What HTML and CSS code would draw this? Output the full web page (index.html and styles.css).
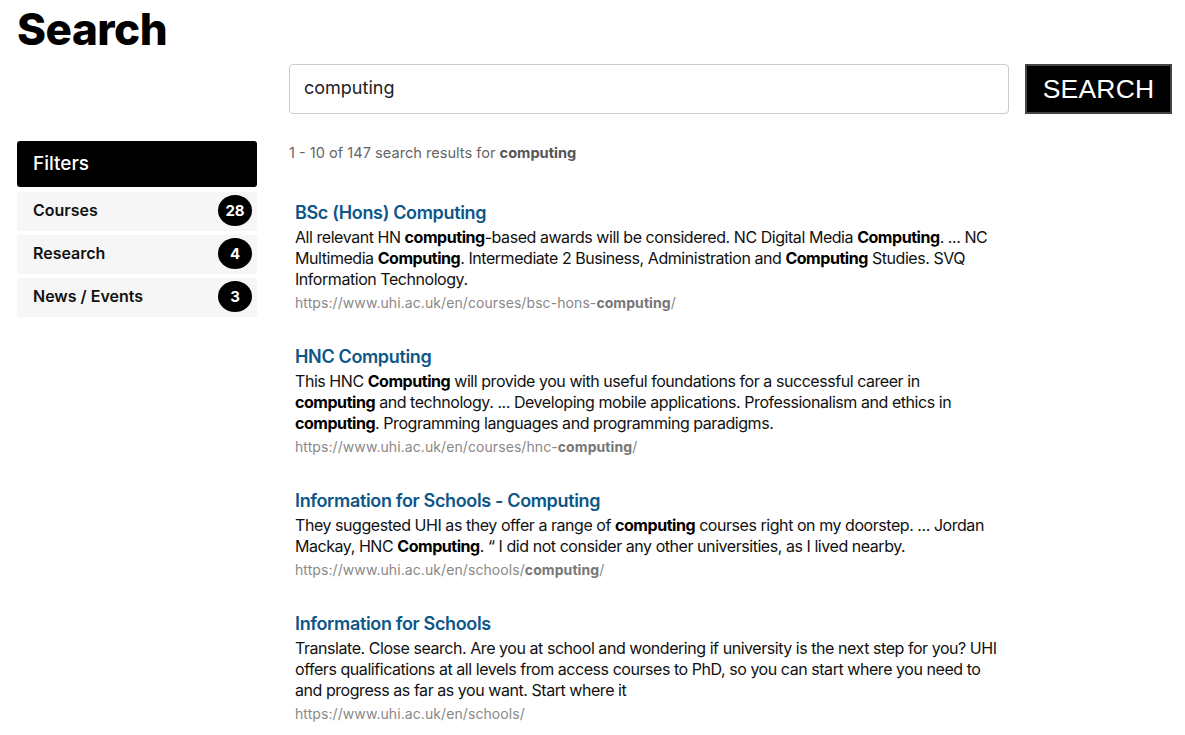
FILE: index.html
```html
<!DOCTYPE html>
<html lang="en">
<head>
<meta charset="utf-8">
<title>Search</title>
<link rel="stylesheet" href="styles.css">
</head>
<body>
<div class="page">
  <h1 class="page-title">Search</h1>
  <div class="layout">
    <div class="spacer"></div>
    <form class="search-form">
      <input class="search-input" type="text" value="computing">
      <button class="search-button" type="button">SEARCH</button>
    </form>
    <aside class="filters">
      <div class="filters-head">Filters</div>
      <a class="filter-row" href="#"><span>Courses</span><span class="badge">28</span></a>
      <a class="filter-row" href="#"><span>Research</span><span class="badge">4</span></a>
      <a class="filter-row" href="#"><span>News / Events</span><span class="badge">3</span></a>
    </aside>
    <main class="results">
      <p class="summary">1 - 10 of 147 search results for <b>computing</b></p>
      <ul class="result-list">
        <li class="result">
          <a class="result-title" href="#">BSc (Hons) Computing</a>
          <p class="result-text">All relevant HN <b>computing</b>-based awards will be considered. NC Digital Media <b>Computing</b>. ... NC Multimedia <b>Computing</b>. Intermediate 2 Business, Administration and <b>Computing</b> Studies. SVQ Information Technology.</p>
          <p class="result-url">https://www.uhi.ac.uk/en/courses/bsc-hons-<b>computing</b>/</p>
        </li>
        <li class="result">
          <a class="result-title" href="#">HNC Computing</a>
          <p class="result-text">This HNC <b>Computing</b> will provide you with useful foundations for a successful career in <b>computing</b> and technology. ... Developing mobile applications. Professionalism and ethics in <b>computing</b>. Programming languages and programming paradigms.</p>
          <p class="result-url">https://www.uhi.ac.uk/en/courses/hnc-<b>computing</b>/</p>
        </li>
        <li class="result">
          <a class="result-title" href="#">Information for Schools - Computing</a>
          <p class="result-text">They suggested UHI as they offer a range of <b>computing</b> courses right on my doorstep. ... Jordan Mackay, HNC <b>Computing</b>. “ I did not consider any other universities, as I lived nearby.</p>
          <p class="result-url">https://www.uhi.ac.uk/en/schools/<b>computing</b>/</p>
        </li>
        <li class="result">
          <a class="result-title" href="#">Information for Schools</a>
          <p class="result-text">Translate. Close search. Are you at school and wondering if university is the next step for you? UHI offers qualifications at all levels from access courses to PhD, so you can start where you need to and progress as far as you want. Start where it</p>
          <p class="result-url">https://www.uhi.ac.uk/en/schools/</p>
        </li>
      </ul>
    </main>
  </div>
</div>
</body>
</html>
```

FILE: styles.css
```css
* { box-sizing: border-box; }
html, body { margin: 0; padding: 0; background: #fff; }
body {
  font-family: Inter, "Liberation Sans", Arial, sans-serif;
  color: #111;
}
.page { padding: 0 13px 0 17px; }
.page-title {
  margin: 0;
  padding-top: 3px;
  font-size: 44px;
  line-height: 52px;
  font-weight: 800;
  letter-spacing: -0.5px;
  color: #000;
}
.layout {
  display: grid;
  grid-template-columns: 240px 1fr;
  column-gap: 32px;
  row-gap: 27px;
  margin-top: 9px;
}
.search-form {
  display: flex;
  gap: 16px;
  margin: 0;
}
.search-input {
  width: 720px;
  height: 50px;
  border: 1px solid #ccc;
  border-radius: 4px;
  padding: 0 14px 3px;
  font-family: inherit;
  font-size: 18px;
  color: #222;
  outline: none;
}
.search-button {
  width: 147px;
  height: 50px;
  background: #000;
  color: #fff;
  border: 2px solid #444;
  font-family: "Liberation Sans", Arial, sans-serif;
  font-size: 26.5px;
  padding: 0;
  letter-spacing: 0.2px;
}
.filters { display: flex; flex-direction: column; gap: 4px; }
.filters-head {
  background: #000;
  color: #fff;
  height: 46px;
  border-radius: 3px;
  padding: 0 16px 2px;
  display: flex;
  align-items: center;
  font-size: 19px;
  font-weight: 500;
  margin-bottom: 1px;
}
.filter-row {
  display: flex;
  align-items: center;
  justify-content: space-between;
  background: #f6f6f6;
  border-radius: 3px;
  height: 39px;
  padding: 0 5px 3px 16px;
  color: #111;
  text-decoration: none;
  font-size: 16px;
  font-weight: 600;
}
.badge {
  background: #000;
  color: #fff;
  min-width: 34px;
  height: 31px;
  border-radius: 50%;
  display: flex;
  align-items: center;
  justify-content: center;
  font-size: 15px;
  font-weight: 700;
}
.results { min-width: 0; }
.summary {
  margin: 2px 0 0;
  font-size: 14.6px;
  line-height: 20px;
  color: #666;
}
.summary b { color: #555; }
.result-list {
  list-style: none;
  margin: 38px 0 0;
  padding: 0 0 0 6px;
  width: 714px;
}
.result { margin-bottom: 32px; }
.result-title {
  display: block;
  font-size: 18px;
  line-height: 24px;
  font-weight: 600;
  letter-spacing: -0.35px;
  color: #0d5688;
  text-decoration: none;
  margin-bottom: 2px;
}
.result-text {
  margin: 0;
  font-size: 16px;
  line-height: 21px;
  letter-spacing: -0.45px;
  color: #111;
}
.result-text b { font-weight: 700; color: #000; }
.result-url {
  margin: 3px 0 0;
  font-size: 14px;
  line-height: 20px;
  letter-spacing: 0.08px;
  color: #888;
}
.result-url b { color: #777; }
```
